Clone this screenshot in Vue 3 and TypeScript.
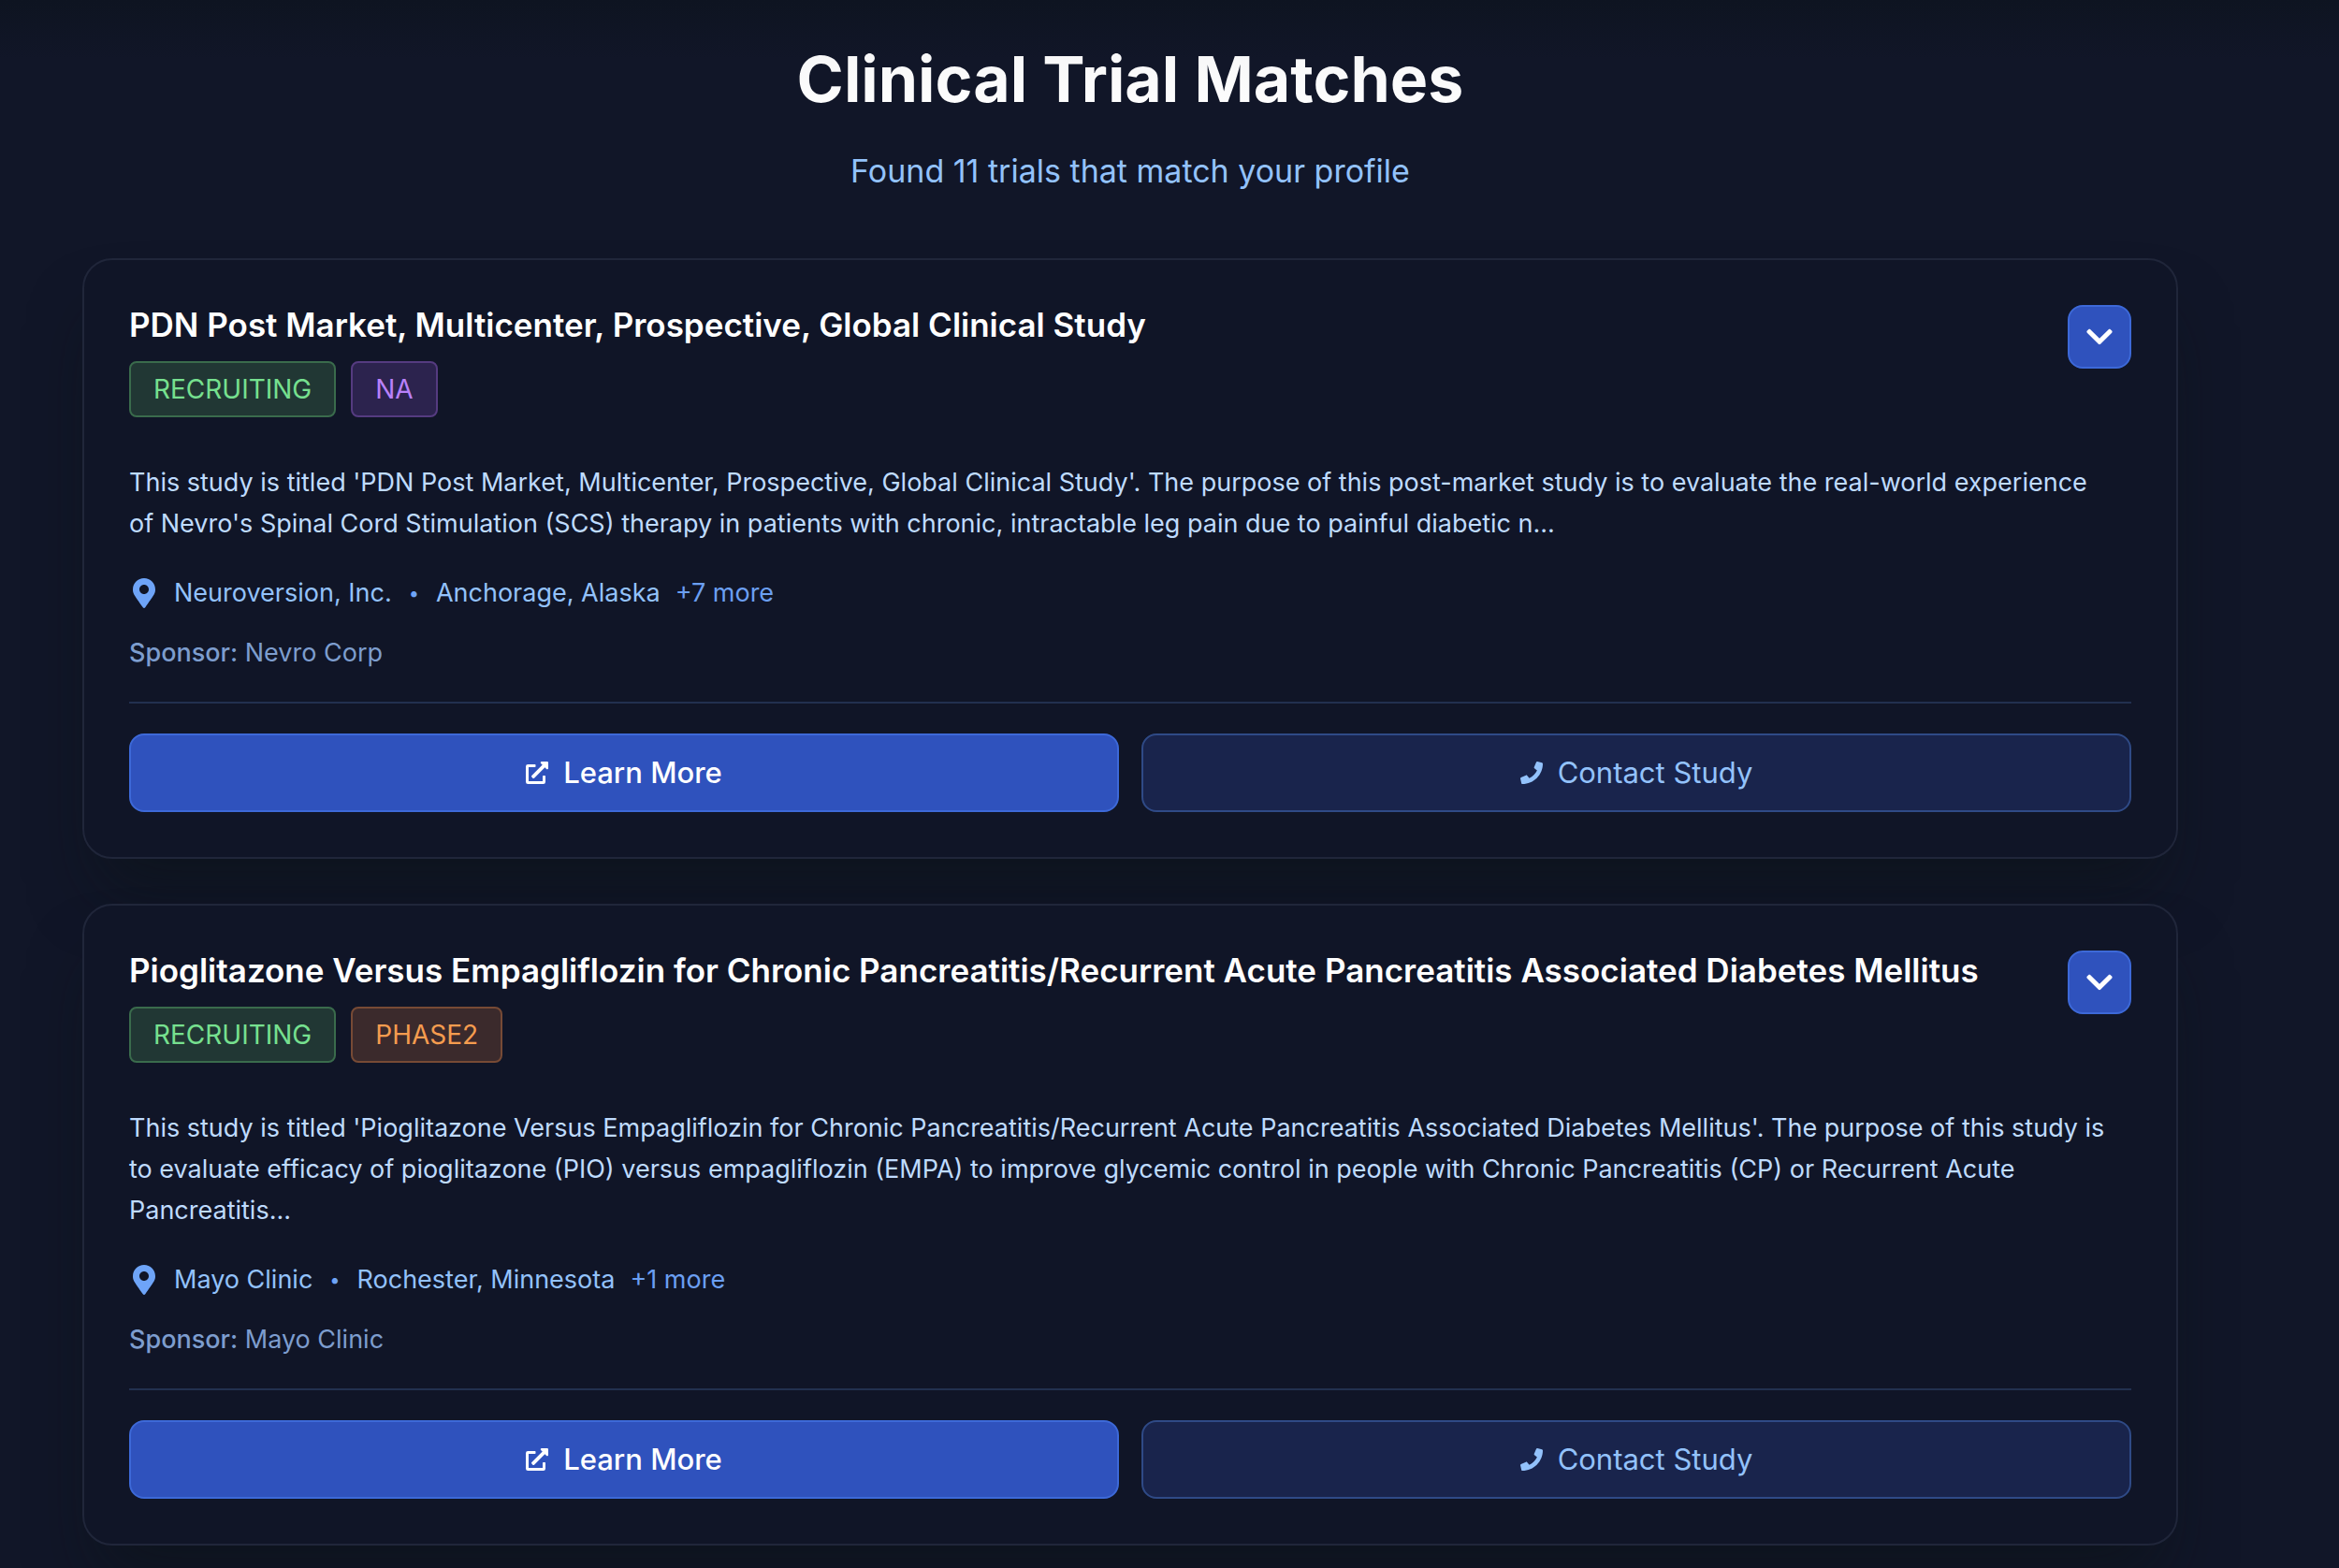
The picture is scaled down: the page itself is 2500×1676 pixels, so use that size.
<script setup lang="ts">
interface Trial {
  id: string
  title: string
  status: string
  phase: string
  phaseTone: 'purple' | 'orange'
  summary: string
  facility: string
  place: string
  moreSites: number
  sponsor: string
}

const matchCount = 11

const trials: Trial[] = [
  {
    id: 'pdn',
    title: 'PDN Post Market, Multicenter, Prospective, Global Clinical Study',
    status: 'RECRUITING',
    phase: 'NA',
    phaseTone: 'purple',
    summary:
      "This study is titled 'PDN Post Market, Multicenter, Prospective, Global Clinical Study'. The purpose of this post-market study is to evaluate the real-world experience of Nevro's Spinal Cord Stimulation (SCS) therapy in patients with chronic, intractable leg pain due to painful diabetic n...",
    facility: 'Neuroversion, Inc.',
    place: 'Anchorage, Alaska',
    moreSites: 7,
    sponsor: 'Nevro Corp',
  },
  {
    id: 'pioglitazone',
    title:
      'Pioglitazone Versus Empagliflozin for Chronic Pancreatitis/Recurrent Acute Pancreatitis Associated Diabetes Mellitus',
    status: 'RECRUITING',
    phase: 'PHASE2',
    phaseTone: 'orange',
    summary:
      "This study is titled 'Pioglitazone Versus Empagliflozin for Chronic Pancreatitis/Recurrent Acute Pancreatitis Associated Diabetes Mellitus'. The purpose of this study is to evaluate efficacy of pioglitazone (PIO) versus empagliflozin (EMPA) to improve glycemic control in people with Chronic Pancreatitis (CP) or Recurrent Acute Pancreatitis...",
    facility: 'Mayo Clinic',
    place: 'Rochester, Minnesota',
    moreSites: 1,
    sponsor: 'Mayo Clinic',
  },
]
</script>

<template>
  <main class="page">
    <header class="intro">
      <h1>Clinical Trial Matches</h1>
      <p>Found {{ matchCount }} trials that match your profile</p>
    </header>

    <section class="list">
      <article v-for="trial in trials" :key="trial.id" class="card">
        <div class="card-head">
          <div class="heading">
            <h2>{{ trial.title }}</h2>
            <div class="badges">
              <span class="badge green">{{ trial.status }}</span>
              <span class="badge" :class="trial.phaseTone">{{ trial.phase }}</span>
            </div>
          </div>
          <button type="button" class="toggle" aria-label="Show details">
            <svg viewBox="0 0 448 512" aria-hidden="true">
              <path d="M207.029 381.476L12.686 187.132c-9.373-9.373-9.373-24.569 0-33.941l22.667-22.667c9.357-9.357 24.522-9.375 33.901-.04L224 284.505l154.745-154.021c9.379-9.335 24.544-9.317 33.901.04l22.667 22.667c9.373 9.373 9.373 24.569 0 33.941L240.971 381.476c-9.373 9.372-24.569 9.372-33.942 0z" />
            </svg>
          </button>
        </div>

        <p class="summary">{{ trial.summary }}</p>

        <div class="location">
          <svg class="pin" viewBox="0 0 384 512" aria-hidden="true">
            <path d="M172.268 501.67C26.97 291.031 0 269.413 0 192 0 85.961 85.961 0 192 0s192 85.961 192 192c0 77.413-26.97 99.031-172.268 309.67-9.535 13.774-29.93 13.773-39.464 0zM192 272c44.183 0 80-35.817 80-80s-35.817-80-80-80-80 35.817-80 80 35.817 80 80 80z" />
          </svg>
          <span>{{ trial.facility }}</span>
          <span class="dot">•</span>
          <span>{{ trial.place }}</span>
          <span class="more">+{{ trial.moreSites }} more</span>
        </div>

        <p class="sponsor"><strong>Sponsor:</strong> {{ trial.sponsor }}</p>

        <div class="actions">
          <button type="button" class="action primary">
            <svg viewBox="0 0 512 512" aria-hidden="true">
              <path d="M432,320H400a16,16,0,0,0-16,16V448H64V128H208a16,16,0,0,0,16-16V80a16,16,0,0,0-16-16H48A48,48,0,0,0,0,112V464a48,48,0,0,0,48,48H400a48,48,0,0,0,48-48V336A16,16,0,0,0,432,320ZM488,0h-128c-21.37,0-32.05,25.91-17,41l35.73,35.73L135,320.37a24,24,0,0,0,0,34L157.67,377a24,24,0,0,0,34,0L435.28,133.32,471,169c15,15,41,4.5,41-17V24A24,24,0,0,0,488,0Z" />
            </svg>
            Learn More
          </button>
          <button type="button" class="action secondary">
            <svg viewBox="0 0 512 512" aria-hidden="true">
              <path d="M493.4 24.6l-104-24c-11.3-2.6-22.9 3.3-27.5 13.9l-48 112c-4.2 9.8-1.4 21.3 6.9 28l60.6 49.6c-36 76.7-98.9 140.5-177.2 177.2l-49.6-60.6c-6.8-8.3-18.2-11.1-28-6.9l-112 48C3.9 366.5-2 378.1.6 389.4l24 104C27.1 504.2 36.7 512 48 512c256.1 0 464-207.5 464-464 0-11.2-7.7-20.9-18.6-23.4z" />
            </svg>
            Contact Study
          </button>
        </div>
      </article>
    </section>
  </main>
</template>

<style>
html {
  background: #111628;
}

body {
  margin: 0;
}
</style>

<style scoped>
.page {
  box-sizing: border-box;
  min-height: 100vh;
  padding: 40px 172px 24px 88px;
  background: linear-gradient(#0e1421, #111628 64px);
  color: #fff;
  font-family: Inter, "Liberation Sans", sans-serif;
}

h1,
h2,
p {
  margin: 0;
}

.intro {
  margin-bottom: 66px;
  text-align: center;
}

.intro h1 {
  margin-bottom: 28px;
  background: linear-gradient(#f5f5f6, #fff);
  -webkit-background-clip: text;
  background-clip: text;
  color: transparent;
  font-size: 68px;
  font-weight: 700;
  line-height: 88px;
}

.intro p {
  color: #93c2fb;
  font-size: 34px;
  line-height: 54px;
}

.list {
  display: flex;
  flex-direction: column;
  gap: 48px;
}

.card {
  padding: 48px;
  border: 2px solid #20263a;
  border-radius: 32px;
  background: #101527;
  box-shadow: 0 48px 72px -20px rgba(10, 18, 18, 0.5);
}

.card-head {
  display: flex;
  align-items: flex-start;
  justify-content: space-between;
  gap: 32px;
  margin-bottom: 48px;
}

.heading h2 {
  margin-bottom: 18px;
  font-size: 35px;
  font-weight: 600;
  line-height: 42px;
}

.badges {
  display: flex;
  gap: 16px;
}

.badge {
  padding: 8px 24px;
  border: 2px solid;
  border-radius: 8px;
  font-size: 28px;
  font-weight: 400;
  line-height: 40px;
}

.green {
  border-color: #3a6b4c;
  background: #213734;
  color: #76e08f;
}

.purple {
  border-color: #553b80;
  background: #2c234e;
  color: #b981fa;
}

.orange {
  border-color: #774a35;
  background: #3b2a2c;
  color: #f59c4f;
}

.toggle {
  display: flex;
  flex: none;
  align-items: center;
  justify-content: center;
  width: 68px;
  height: 68px;
  padding: 0;
  border: 2px solid #3d69d8;
  border-radius: 16px;
  background: #2f52bd;
  color: #fff;
}

.toggle svg {
  width: 32px;
  height: 32px;
}

svg {
  flex: none;
  fill: currentColor;
}

.summary {
  margin-bottom: 32px;
  padding-right: 16px;
  color: #bfdbfe;
  font-size: 27px;
  line-height: 44px;
}

.location {
  display: flex;
  align-items: center;
  gap: 16px;
  margin-bottom: 24px;
  color: #93c2fb;
  font-size: 27px;
  line-height: 40px;
}

.pin {
  width: 32px;
  height: 32px;
  color: #6ea4f8;
}

.dot {
  padding: 0 2px;
  color: #6ea4f8;
  font-size: 20px;
}

.more {
  color: #6b9ff2;
}

.sponsor {
  margin-bottom: 32px;
  color: #7d9dce;
  font-size: 27px;
  line-height: 40px;
}

.sponsor strong {
  font-weight: 500;
}

.actions {
  display: flex;
  gap: 24px;
  padding-top: 32px;
  border-top: 2px solid #22304f;
}

.action {
  display: flex;
  flex: 1;
  align-items: center;
  justify-content: center;
  gap: 16px;
  padding: 16px;
  border: 2px solid;
  border-radius: 16px;
  font: inherit;
  font-size: 31px;
  line-height: 48px;
}

.action svg {
  width: 24px;
  height: 24px;
}

.primary {
  border-color: #3d69d8;
  background: #2f52bd;
  color: #fff;
  font-weight: 500;
}

.secondary {
  border-color: #2f4a86;
  background: #19244c;
  color: #93c2fb;
}
</style>
